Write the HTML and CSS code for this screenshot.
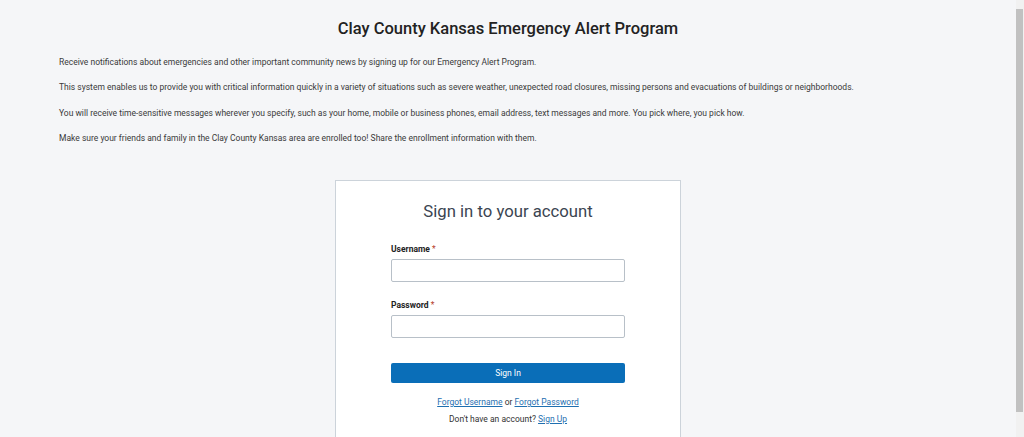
FILE: index.html
```html
<!DOCTYPE html>
<html lang="en">
<head>
<meta charset="utf-8">
<title>Clay County Kansas Emergency Alert Program</title>
<link rel="stylesheet" href="styles.css">
</head>
<body>
<main class="page">
  <h1 class="title">Clay County Kansas Emergency Alert Program</h1>
  <div class="intro">
    <p>Receive notifications about emergencies and other important community news by signing up for our Emergency Alert Program.</p>
    <p>This system enables us to provide you with critical information quickly in a variety of situations such as severe weather, unexpected road closures, missing persons and evacuations of buildings or neighborhoods.</p>
    <p>You will receive time-sensitive messages wherever you specify, such as your home, mobile or business phones, email address, text messages and more. You pick where, you pick how.</p>
    <p>Make sure your friends and family in the Clay County Kansas area are enrolled too! Share the enrollment information with them.</p>
  </div>
  <section class="card">
    <h2 class="card-title">Sign in to your account</h2>
    <form class="form">
      <label class="field">
        <span class="label">Username <span class="req">*</span></span>
        <input class="input" type="text">
      </label>
      <label class="field">
        <span class="label">Password <span class="req">*</span></span>
        <input class="input" type="password">
      </label>
      <button class="btn" type="button">Sign In</button>
    </form>
    <p class="links"><a href="#">Forgot Username</a> or <a href="#">Forgot Password</a></p>
    <p class="links signup">Don't have an account? <a href="#">Sign Up</a></p>
  </section>
</main>
<div class="scrollbar" aria-hidden="true"><div class="thumb"></div></div>
</body>
</html>
```

FILE: styles.css
```css
html {
  background: #f5f6f8;
}
body {
  margin: 0;
  font-family: Roboto, "Liberation Sans", sans-serif;
  color: #333;
}
.page {
  padding: 18px 67px 60px 59px;
}
.title {
  margin: 0;
  text-align: center;
  font-size: 16.5px;
  font-weight: 500;
  color: #222;
  line-height: 22px;
}
.intro {
  margin-top: 17px;
}
.intro p {
  margin: 0 0 14.3px;
  font-size: 8.5px;
  line-height: 11px;
  color: #3a3a3a;
}
.card {
  width: 344px;
  margin: 36px auto 0;
  background: #fff;
  border: 1px solid #ccd3da;
  padding: 20px 0 20px;
  display: flex;
  flex-direction: column;
  align-items: center;
}
.card-title {
  margin: 0;
  font-size: 16.7px;
  font-weight: 400;
  color: #3b4551;
  line-height: 22px;
}
.form {
  width: 234px;
  margin-top: 20px;
  display: flex;
  flex-direction: column;
}
.field {
  display: flex;
  flex-direction: column;
  margin-bottom: 25px;
}
.field:first-child {
  margin-bottom: 17px;
}
.label {
  font-size: 8.5px;
  font-weight: 700;
  color: #222;
  line-height: 12px;
  margin-bottom: 4px;
}
.req {
  color: #b5402a;
  font-weight: 400;
}
.input {
  box-sizing: border-box;
  height: 23px;
  width: 100%;
  border: 1px solid #b8c0c8;
  border-radius: 2px;
  background: #fff;
  margin: 0;
}
.btn {
  margin-top: 0;
  height: 20px;
  border: none;
  border-radius: 2px;
  background: #0a6eb8;
  color: #fff;
  font-family: inherit;
  font-size: 8.5px;
}
.links {
  margin: 14px 0 0;
  font-size: 8.5px;
  line-height: 11px;
  color: #333;
}
.links a {
  color: #1f6fb0;
}
.signup {
  margin-top: 6px;
}
.scrollbar {
  position: fixed;
  top: 0;
  right: 0;
  bottom: 0;
  width: 8px;
  background: #f1f1f1;
  padding: 9px 1px 25px 0;
  box-sizing: border-box;
}
.thumb {
  height: 100%;
  background: #c1c1c1;
}
```
